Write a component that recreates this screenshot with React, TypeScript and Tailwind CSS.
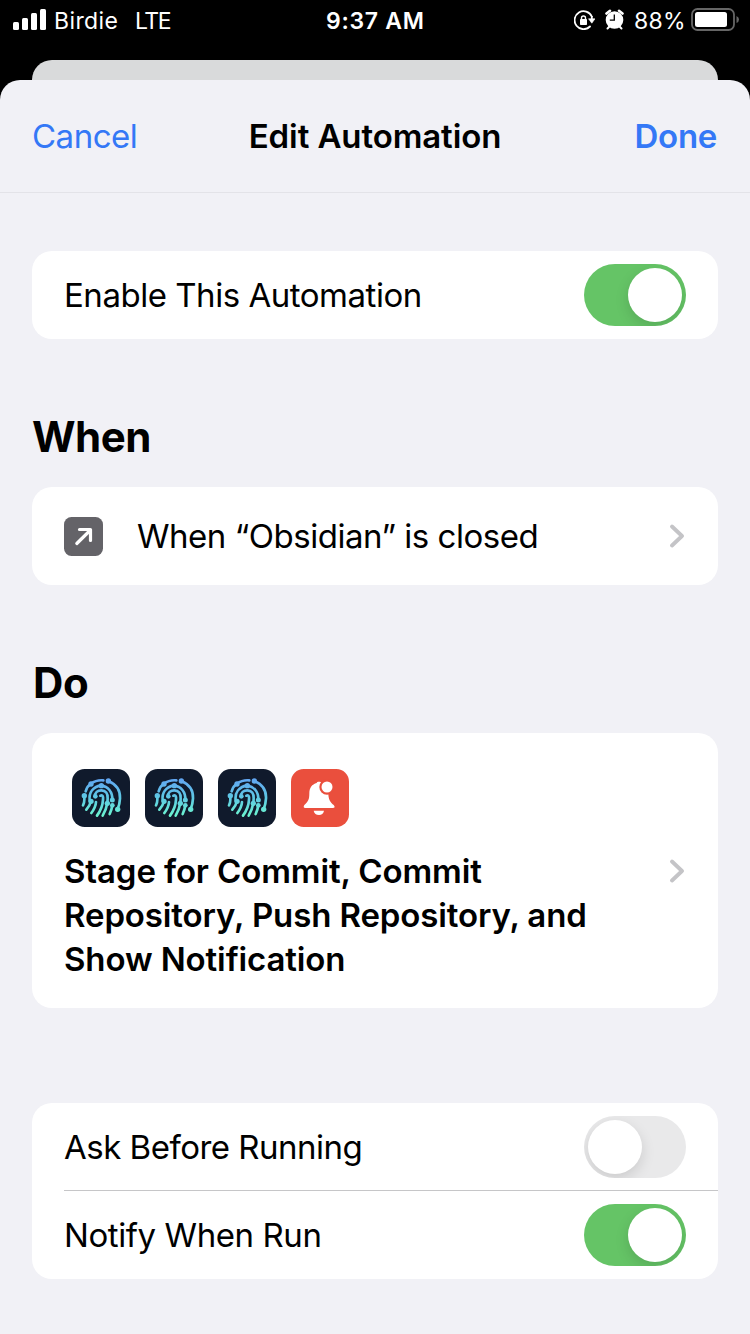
import React from "react";

function Toggle({ on }: { on: boolean }) {
  return (
    <button
      role="switch"
      aria-checked={on}
      className={
        on
          ? "flex h-[62px] w-[102px] shrink-0 items-center justify-end overflow-hidden rounded-full bg-[#65c466] p-1"
          : "flex h-[62px] w-[102px] shrink-0 items-center justify-start overflow-hidden rounded-full bg-[#e9e9ea] p-1"
      }
    >
      <span className="size-[54px] rounded-full bg-white shadow-[0_5px_14px_rgba(0,0,0,0.13)]" />
    </button>
  );
}

function Chevron() {
  return (
    <svg className="mr-px h-6 w-4 shrink-0" viewBox="0 0 16 24" fill="none" stroke="#c4c4c7" strokeWidth="3.8" strokeLinecap="round" strokeLinejoin="round">
      <path d="M3 2.500 13 12 3 21.500" />
    </svg>
  );
}

function FingerprintIcon({ id }: { id: string }) {
  return (
    <svg className="size-[58px]" viewBox="0 0 174 174" fill="none">
      <defs>
        <linearGradient id={id} x1="0" y1="30" x2="0" y2="142" gradientUnits="userSpaceOnUse">
          <stop offset="0" stopColor="#62a6f2" />
          <stop offset="0.5" stopColor="#5ec8e4" />
          <stop offset="1" stopColor="#6cf5cf" />
        </linearGradient>
      </defs>
      <rect width="174" height="174" rx="38" fill="#101a2c" />
      <g stroke={`url(#${id})`} strokeWidth="8" strokeLinecap="round" strokeLinejoin="round">
        <path d="M41 67Q45 52 57 44Q73 32 94 34" />
        <path d="M109 36C133 46 145 65 144 88Q143 106 137 121" />
        <path d="M37 80V92Q37 102 33 109" />
        <path d="M53 94C50 70 63 54 87 49C108 53 122 68 121 93" />
        <path d="M57 97Q53 111 43 122" />
        <path d="M69 83C68 70 77 64 88 64C101 64 108 73 107 88L106 103" />
        <path d="M72 99Q71 115 58 132" />
        <path d="M85 80C93 77 94 84 93 92C92 112 87 124 75 140" />
        <path d="M106 103Q102 124 92 140" />
        <path d="M121 108Q119 123 113 135" />
      </g>
      <g fill={`url(#${id})`}>
        <circle cx="57" cy="45" r="8" />
        <circle cx="109" cy="36" r="8" />
        <circle cx="88" cy="50" r="8" />
        <circle cx="37" cy="80" r="8" />
        <circle cx="70" cy="82" r="7" />
        <circle cx="57" cy="97" r="8" />
        <circle cx="106" cy="103" r="8" />
        <circle cx="121" cy="93" r="7.500" />
        <circle cx="121" cy="109" r="7" />
        <circle cx="137" cy="121" r="8" />
      </g>
    </svg>
  );
}

function BellIcon() {
  return (
    <svg className="size-[58px]" viewBox="0 0 174 174">
      <rect width="174" height="174" rx="38" fill="#ea4f3d" />
      <path d="M77 42C77 37 91 37 91 42C106 46 112 58 112 72C112 91 117 99 128 108Q135 117 125 117H43Q35 117 40 108C52 98 55 91 55 73C55 56 63 46 77 42Z" fill="#fff" />
      <path d="M68 125H99Q96 138 84 138Q71 138 68 125Z" fill="#fff" />
      <circle cx="108" cy="54" r="23" fill="#ea4f3d" />
      <circle cx="108" cy="54" r="16.500" fill="#fff" />
    </svg>
  );
}

function StatusBar() {
  return (
    <div className="flex h-[60px] items-start text-[23px] leading-[42px] text-white">
      <div className="flex w-[326px] pl-[13px]">
        <svg className="mt-[9px] h-[21px] w-[33px]" viewBox="0 0 33 21" fill="#fff">
          <rect x="0" y="13" width="6" height="8" rx="1.500" />
          <rect x="9" y="9" width="6" height="12" rx="1.500" />
          <rect x="18" y="4" width="6" height="17" rx="1.500" />
          <rect x="27" y="0" width="6" height="21" rx="1.500" />
        </svg>
        <span className="ml-[8px] w-[81px] tracking-[0.4px]">Birdie</span>
        <span className="tracking-[-1.5px]">LTE</span>
      </div>
      <span className="w-[247px] whitespace-nowrap font-semibold tracking-[0.7px]">9:37 AM</span>
      <svg className="ml-px mt-[10px] h-5 w-[21px]" viewBox="0 0 21 20" fill="none">
        <path d="M17.800 6.500A9 9 0 1 0 16 16.500" stroke="#fff" strokeWidth="1.800" strokeLinecap="round" />
        <path d="M14.500 8.800H21L17.800 13.200Z" fill="#fff" stroke="#fff" strokeWidth="0.600" strokeLinejoin="round" />
        <path d="M17.800 6V9.500" stroke="#fff" strokeWidth="1.800" />
        <rect x="6" y="9" width="7" height="6" rx="0.800" fill="#fff" />
        <path d="M7.500 9.500V8a2 2 0 0 1 4 0v1.500" stroke="#fff" strokeWidth="1.400" />
      </svg>
      <svg className="ml-[10px] mt-[9px] h-[21px] w-5" viewBox="0 0 20 21" fill="none">
        <circle cx="9.500" cy="11" r="8.800" fill="#fff" />
        <path d="M1.500 4.500 5 1.800M17.500 4.500 14 1.800" stroke="#fff" strokeWidth="2.600" strokeLinecap="round" />
        <path d="M2.500 19.500 4.500 17.500M16.500 19.500 14.500 17.500" stroke="#fff" strokeWidth="2" strokeLinecap="round" />
        <path d="M9.300 5.500V11.200H4.800" stroke="#000" strokeWidth="1.300" />
      </svg>
      <span className="ml-[9px] w-[57px] whitespace-nowrap tracking-[0.3px]">88%</span>
      <svg className="mt-[8px] h-[23px] w-[48px]" viewBox="0 0 48 23" fill="none">
        <rect x="1" y="1" width="42" height="21" rx="5.500" stroke="#666" strokeWidth="1.800" />
        <rect x="4" y="4" width="32" height="15" rx="2.500" fill="#fff" />
        <path d="M45.500 8Q48 9 48 11.500Q48 14 45.500 15Z" fill="#666" />
      </svg>
    </div>
  );
}

export default function App() {
  return (
    <div className="h-[1334px] w-[750px] overflow-hidden bg-black font-['Inter','Liberation_Sans',sans-serif] text-[33px] text-black">
      <StatusBar />
      <div className="mx-8 h-5 rounded-t-[20px] bg-[#d9dadb]" />
      <div className="bg-black">
        <div className="h-[1254px] rounded-t-[20px] bg-[#f1f1f6]">
          <header className="grid h-[113px] grid-cols-[1fr_auto_1fr] items-center border-b border-[#e3e3e8] px-8 pt-0.5 text-[#3478f6]">
            <button className="text-left tracking-[-0.5px]">Cancel</button>
            <h1 className="font-semibold tracking-[-0.1px] text-black">Edit Automation</h1>
            <button className="pr-px text-right font-semibold tracking-[-0.3px]">Done</button>
          </header>
          <main className="px-8 pt-[58px]">
            <section className="flex h-[88px] items-center justify-between rounded-[20px] bg-white px-8">
              <span className="pt-0.5 tracking-[-0.47px]">Enable This Automation</span>
              <Toggle on />
            </section>
            <h2 className="mt-[68px] h-[80px] text-[42px] font-bold leading-[60px] tracking-[-0.5px]">When</h2>
            <section className="flex h-[98px] items-center rounded-[20px] bg-white px-8">
              <svg className="size-[39px]" viewBox="0 0 39 39" fill="none">
                <rect width="39" height="39" rx="7.500" fill="#646368" />
                <path d="M12.800 26.500 26 13.500M15.500 12.500H26.500V23.500" stroke="#fff" strokeWidth="3.200" strokeLinecap="round" strokeLinejoin="round" />
              </svg>
              <span className="ml-[34px] flex-1 whitespace-nowrap pt-0.5 tracking-[-0.47px]">When “Obsidian” is closed</span>
              <Chevron />
            </section>
            <h2 className="mt-[68px] h-[80px] pl-px text-[42px] font-bold leading-[60px] tracking-[-0.3px]">Do</h2>
            <section className="flex h-[275px] items-center rounded-[20px] bg-white px-8">
              <div className="flex-1 pt-2">
                <div className="mb-[22px] flex gap-[15px] pl-2">
                  <FingerprintIcon id="print-stage" />
                  <FingerprintIcon id="print-commit" />
                  <FingerprintIcon id="print-push" />
                  <BellIcon />
                </div>
                <p className="whitespace-nowrap font-semibold leading-[44px] tracking-[-0.12px]">
                  Stage for Commit, Commit
                  <br />
                  Repository, Push Repository, and
                  <br />
                  Show Notification
                </p>
              </div>
              <Chevron />
            </section>
            <section className="mt-[95px] rounded-[20px] bg-white pl-8">
              <div className="flex h-[88px] items-center justify-between border-b border-[#c6c6c8] pr-8">
                <span className="pt-0.5 tracking-[-0.5px]">Ask Before Running</span>
                <Toggle on={false} />
              </div>
              <div className="flex h-[88px] items-center justify-between pr-8">
                <span className="pt-0.5 tracking-[-0.42px]">Notify When Run</span>
                <Toggle on />
              </div>
            </section>
          </main>
        </div>
      </div>
    </div>
  );
}
